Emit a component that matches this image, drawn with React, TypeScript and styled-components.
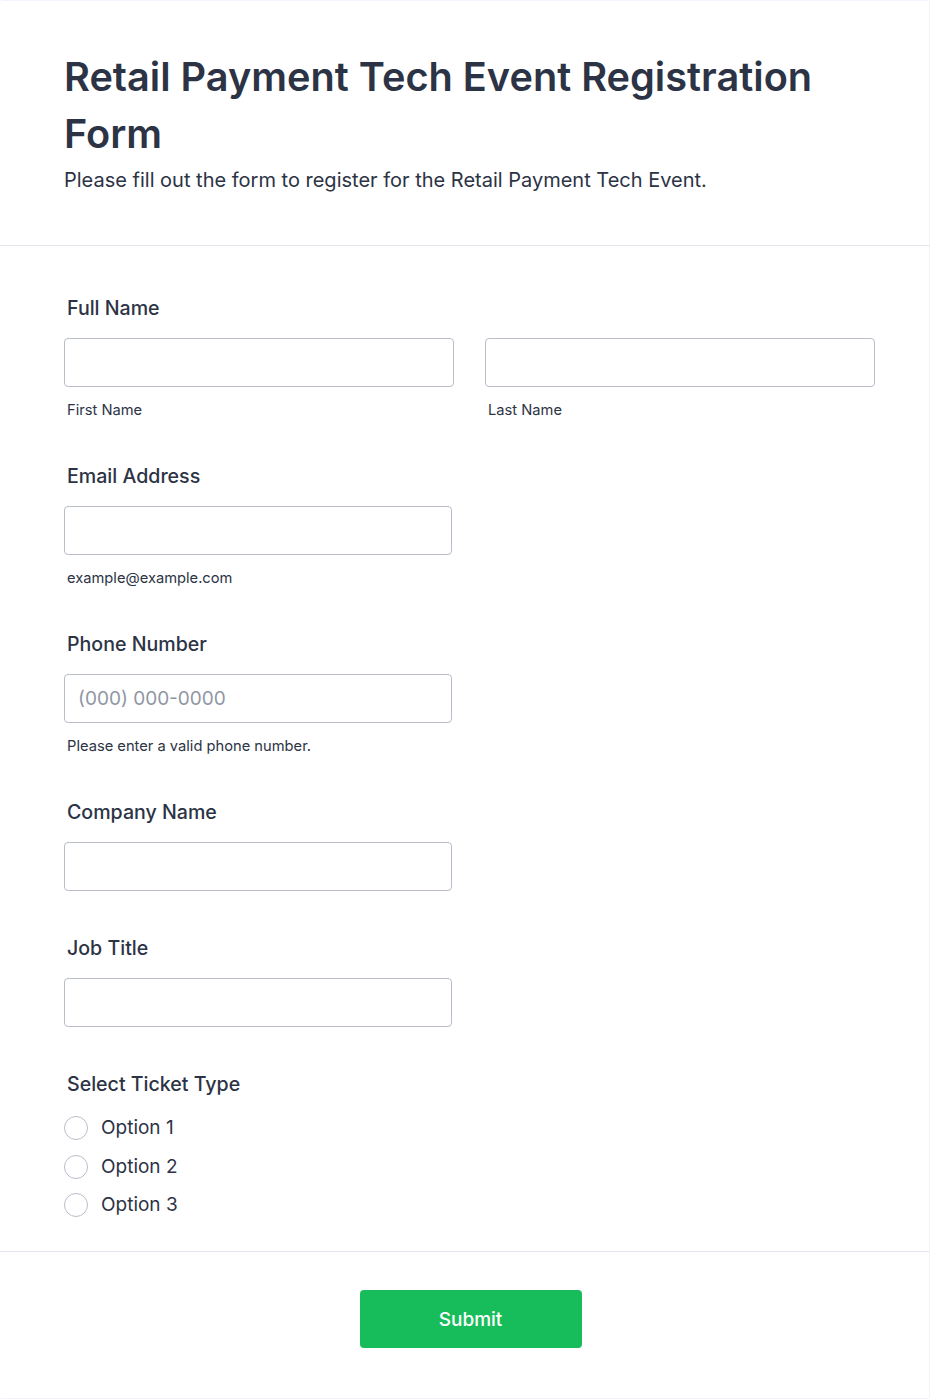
import React from "react";
import styled, { createGlobalStyle } from "styled-components";

const GlobalStyle = createGlobalStyle`
  * { box-sizing: border-box; }
  body {
    margin: 0;
    background: #ffffff;
    font-family: Inter, "Noto Sans", sans-serif;
    color: #2c3345;
  }
`;

const ticketOptions = ["Option 1", "Option 2", "Option 3"];

const App = () => {
  return (
    <>
      <GlobalStyle />
      <Card>
        <Header>
          <Title>Retail Payment Tech Event Registration Form</Title>
          <Subtitle>
            Please fill out the form to register for the Retail Payment Tech
            Event.
          </Subtitle>
        </Header>

        <FormBody>
          <Field>
            <Label>Full Name</Label>
            <InputRow>
              <InputCol>
                <TextInput wide />
                <SubLabel>First Name</SubLabel>
              </InputCol>
              <InputCol>
                <TextInput wide />
                <SubLabel>Last Name</SubLabel>
              </InputCol>
            </InputRow>
          </Field>

          <Field>
            <Label>Email Address</Label>
            <TextInput />
            <SubLabel>example@example.com</SubLabel>
          </Field>

          <Field>
            <Label>Phone Number</Label>
            <TextInput placeholder="(000) 000-0000" />
            <SubLabel>Please enter a valid phone number.</SubLabel>
          </Field>

          <Field>
            <Label>Company Name</Label>
            <TextInput />
          </Field>

          <Field>
            <Label>Job Title</Label>
            <TextInput />
          </Field>

          <Field>
            <Label>Select Ticket Type</Label>
            <RadioList>
              {ticketOptions.map((opt) => (
                <RadioItem key={opt}>
                  <Radio type="radio" name="ticket" />
                  <span>{opt}</span>
                </RadioItem>
              ))}
            </RadioList>
          </Field>
        </FormBody>

        <Footer>
          <SubmitButton type="button">Submit</SubmitButton>
        </Footer>
      </Card>
    </>
  );
};

export default App;

const Card = styled.div`
  width: 930px;
  min-height: 1399px;
  border: 1px solid #f3f3fe;
  border-left: none;
  border-radius: 3px;
  background: #ffffff;
`;

const Header = styled.div`
  padding: 48px 64px 52px 64px;
  border-bottom: 1px solid #e3e5ec;
`;

const Title = styled.h1`
  margin: 0;
  font-size: 39.7px;
  line-height: 57px;
  font-weight: 600;
  color: #2c3345;
  max-width: 800px;
`;

const Subtitle = styled.p`
  margin: 4px 0 0 0;
  font-size: 20px;
  line-height: 26px;
  color: #2c3345;
`;

const FormBody = styled.div`
  padding: 51px 54px 34px 64px;
`;

const Field = styled.div`
  display: flex;
  flex-direction: column;
  align-items: flex-start;
  margin-bottom: 46px;

  &:last-child {
    margin-bottom: 0;
  }
`;

const Label = styled.label`
  padding-left: 3px;
  font-size: 19.6px;
  line-height: 22px;
  font-weight: 500;
  color: #2c3345;
  margin-bottom: 19px;
`;

const InputRow = styled.div`
  display: grid;
  grid-template-columns: 390px 390px;
  column-gap: 31px;
`;

const InputCol = styled.div`
  display: flex;
  flex-direction: column;
`;

const TextInput = styled.input<{ wide?: boolean }>`
  width: ${(p) => (p.wide ? "390px" : "388px")};
  height: 49px;
  padding: 0 13px;
  border: 1px solid #b8bdc9;
  border-radius: 4px;
  font-family: Inter, "Noto Sans", sans-serif;
  font-size: 19px;
  color: #2c3345;
  background: #ffffff;

  &::placeholder {
    color: #8f96a3;
  }
`;

const SubLabel = styled.span`
  padding-left: 3px;
  margin-top: 14px;
  font-size: 14.7px;
  line-height: 18px;
  color: #2c3345;
`;

const RadioList = styled.div`
  display: flex;
  flex-direction: column;
  gap: 14.5px;
  margin-top: 2px;
`;

const RadioItem = styled.label`
  display: flex;
  align-items: center;
  gap: 13px;
  font-size: 19px;
  line-height: 24px;
  color: #2c3345;
`;

const Radio = styled.input`
  appearance: none;
  margin: 0;
  width: 24px;
  height: 24px;
  border: 1px solid #b8bdc9;
  border-radius: 50%;
  background: #ffffff;
`;

const Footer = styled.div`
  display: flex;
  justify-content: center;
  padding: 38px 0 48px 12px;
  border-top: 1px solid #e3e5ec;
`;

const SubmitButton = styled.button`
  width: 222px;
  height: 58px;
  border: none;
  border-radius: 4px;
  background: #18bd5b;
  color: #ffffff;
  font-family: Inter, "Noto Sans", sans-serif;
  font-size: 19px;
  font-weight: 500;
  cursor: pointer;
`;
